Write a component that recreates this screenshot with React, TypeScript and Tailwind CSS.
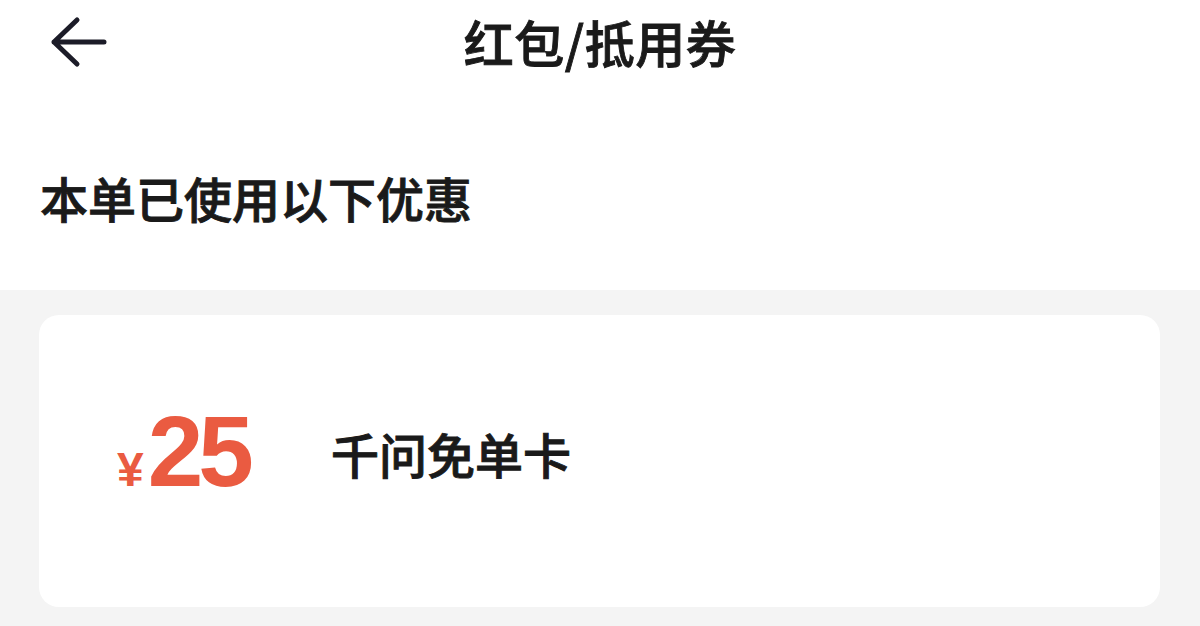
import React from "react";

export default function App() {
  const font = { fontFamily: '"Noto Sans CJK SC", "Noto Sans", sans-serif' };
  return (
    <div className="w-[1200px] h-[626px] overflow-hidden bg-[#f4f4f4] flex flex-col" style={font}>
      <div className="bg-white">
        <div className="relative h-[88px] flex items-center justify-center">
          <div className="absolute left-[48px] top-[15px]">
            <svg width="62" height="56" viewBox="0 0 62 56" fill="none">
              <path d="M56 27H6M29 5L6 27L29 49" stroke="#1c1c28" strokeWidth="5" strokeLinecap="round" strokeLinejoin="round" />
            </svg>
          </div>
          <h1 className="text-[50px] leading-none font-medium text-[#1a1a1a] [-webkit-text-stroke:0.9px_#1a1a1a] tracking-[0.5px] mt-[-6px]">红包/抵用券</h1>
        </div>
        <div className="h-[202px] flex items-center px-[40px]">
          <div className="text-[48px] leading-none font-medium text-[#1a1a1a] [-webkit-text-stroke:0.9px_#1a1a1a] mt-[16px]">本单已使用以下优惠</div>
        </div>
      </div>
      <div className="pt-[25px] pl-[39px] pr-[40px]">
        <div className="h-[292px] bg-white rounded-[20px] flex items-center pl-[78px] pb-[20px]">
          <div className="flex items-baseline text-[#ea5b41] font-bold" style={{ fontFamily: '"Liberation Sans", Arial, sans-serif' }}>
            <span className="text-[48px] leading-none mr-[4px]">¥</span>
            <span className="text-[100px] leading-none tracking-[-5px]">25</span>
          </div>
          <div className="ml-[82px] text-[48px] leading-none font-medium text-[#1a1a1a] [-webkit-text-stroke:0.9px_#1a1a1a] mt-[4px]">千问免单卡</div>
        </div>
      </div>
    </div>
  );
}
